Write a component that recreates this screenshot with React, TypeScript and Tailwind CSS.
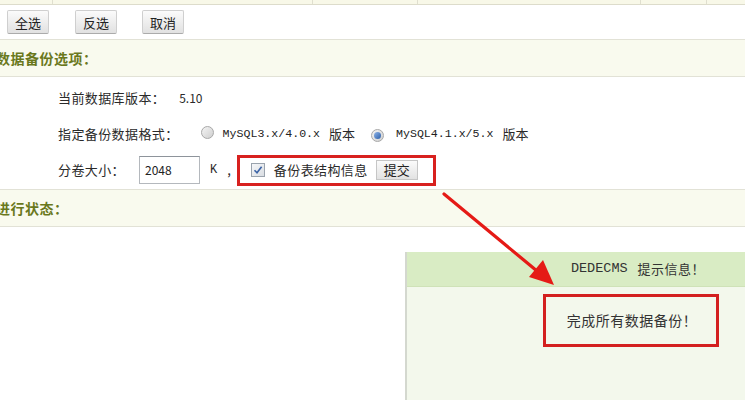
import React from "react";

const cjk = { fontFamily: '"Noto Sans CJK SC", "Noto Sans", sans-serif' };
const mono = { fontFamily: '"Liberation Mono", "Noto Sans CJK SC", monospace' };

function Btn({ label, className = "" }: { label: string; className?: string }) {
  return (
    <button
      className={`h-[24px] w-[42px] rounded-[2px] border border-[#cfcfcf] border-b-[#ababab] bg-gradient-to-b from-[#fbfbfb] to-[#e1e1e1] text-[13px] leading-none text-[#222] ${className}`}
    >
      {label}
    </button>
  );
}

function Radio({ checked }: { checked?: boolean }) {
  return (
    <span className="inline-flex h-[13px] w-[13px] items-center justify-center rounded-full border border-[#a8a8a8] bg-gradient-to-br from-[#f4f4f4] to-[#cfcfcf]">
      {checked && (
        <span className="h-[7px] w-[7px] rounded-full bg-gradient-to-br from-[#8fb4e8] to-[#2a5ea8]" />
      )}
    </span>
  );
}

function SectionHeader({ text }: { text: string }) {
  return (
    <div className="flex h-[38px] items-center border-y border-[#e2e2d6] bg-[#f9faee]">
      <span className="-ml-[4px] text-[14px] font-bold tracking-[0.5px] text-[#6a781c]">{text}</span>
    </div>
  );
}

export default function App() {
  return (
    <div style={cjk} className="relative h-[400px] w-[745px] overflow-hidden bg-white text-[13px] text-[#2a2a2a]">
      {/* table edge from the list above */}
      <div className="flex h-[5px] border-b border-[#dddccb] bg-[#f8f8e8]">
        <div className="w-[53px] border-r border-[#e0dfcf]" />
        <div className="w-[260px] border-r border-[#e0dfcf]" />
        <div className="w-[105px] border-r border-[#e0dfcf]" />
        <div className="w-[223px] border-r border-[#e0dfcf]" />
        <div className="w-[66px] border-r border-[#e0dfcf]" />
        <div className="flex-1" />
      </div>

      {/* selection buttons */}
      <div className="flex h-[34px] items-center pl-[7px]">
        <Btn label="全选" />
        <Btn label="反选" className="ml-[26px]" />
        <Btn label="取消" className="ml-[25px]" />
      </div>

      <SectionHeader text="数据备份选项：" />

      <div className="pt-[3px] pl-[58px]">
        <div className="flex h-[36px] items-center">
          <span className="tracking-[0.4px]">当前数据库版本：</span>
          <span className="ml-[14px] text-[12px]">5.10</span>
        </div>
        <div className="flex h-[35px] items-center">
          <span className="tracking-[0.4px]">指定备份数据格式：</span>
          <span className="ml-[22px]"><Radio /></span>
          <span style={mono} className="ml-[9px] text-[11.6px] text-[#222]">MySQL3.x/4.0.x</span>
          <span className="ml-[9px]">版本</span>
          <span className="ml-[16px]"><Radio checked /></span>
          <span style={mono} className="ml-[12px] text-[11.6px] text-[#222]">MySQL4.1.x/5.x</span>
          <span className="ml-[9px]">版本</span>
        </div>
        <div className="flex h-[38px] items-center">
          <span className="tracking-[0.4px]">分卷大小：</span>
          <span className="ml-[14px] flex h-[28px] w-[61px] items-center border border-[#b4b8bd] border-t-[#8e949b] pl-[5px] text-[12px] text-[#222]">
            2048
          </span>
          <span style={mono} className="ml-[10px] text-[12px]">K</span>
          <span className="ml-[10px]">,</span>
          <span className="ml-[6px] flex h-[31px] w-[199px] items-center border-[3px] border-[#d8211f] pl-[11px]">
            <span className="flex h-[14px] w-[14px] items-center justify-center border border-[#9aa3ad] bg-gradient-to-br from-[#f6f7f9] to-[#d9dde2]">
              <svg width="10" height="10" viewBox="0 0 10 10">
                <path d="M1.5 5.2 L4 7.8 L8.6 1.8" fill="none" stroke="#3b63a6" strokeWidth="1.6" />
              </svg>
            </span>
            <span className="ml-[9px] tracking-[0.4px]">备份表结构信息</span>
            <span className="ml-[8px] flex h-[20px] w-[42px] items-center justify-center border border-[#c6c6c6] bg-gradient-to-b from-[#fbfbfb] to-[#e2e2e2] text-[13px] text-[#222]">
              提交
            </span>
          </span>
        </div>
      </div>

      <SectionHeader text="进行状态：" />

      {/* result message box */}
      <div className="ml-[405px] mt-[25px] h-[200px] w-[464px] border-l-2 border-[#d4d8cf] bg-[#f3f8ec]">
        <div style={mono} className="flex h-[35px] items-center justify-center border-b border-[#cfe2b8] bg-[#d9ecc4] text-[13px] text-[#333]">
          <span className="text-[13.5px]">DEDECMS</span>
          <span style={cjk} className="ml-[10px] tracking-[0.5px]">提示信息！</span>
        </div>
        <div className="flex justify-center pt-[7px]">
          <div className="mr-[14px] flex h-[53px] w-[176px] items-center justify-center border-[3px] border-[#d3201f] pb-[1px]">
            <span className="pl-[2px] text-[14px] tracking-[0.5px] text-[#333]">完成所有数据备份！</span>
          </div>
        </div>
      </div>

      {/* pointer arrow */}
      <svg className="pointer-events-none absolute left-0 top-0" width="745" height="400">
        <line x1="444" y1="194" x2="537" y2="271" stroke="#e51a16" strokeWidth="3.2" strokeLinecap="round" />
        <polygon points="554,285 529,277 543,260" fill="#e51a16" />
      </svg>
    </div>
  );
}
